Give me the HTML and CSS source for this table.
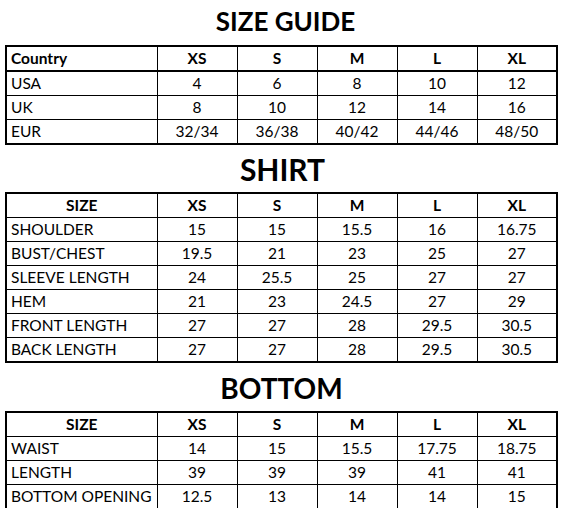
FILE: index.html
```html
<!DOCTYPE html>
<html>
<head>
<meta charset="utf-8">
<link rel="stylesheet" href="styles.css">
</head>
<body>
<div class="page">
  <h1 class="title title-guide">SIZE GUIDE</h1>
  <table class="chart chart-country">
    <colgroup><col class="c-label"><col class="c-size"><col class="c-size"><col class="c-size"><col class="c-size"><col class="c-size"></colgroup>
    <tr class="head"><th class="label">Country</th><th>XS</th><th>S</th><th>M</th><th>L</th><th>XL</th></tr>
    <tr><td class="label">USA</td><td>4</td><td>6</td><td>8</td><td>10</td><td>12</td></tr>
    <tr><td class="label">UK</td><td>8</td><td>10</td><td>12</td><td>14</td><td>16</td></tr>
    <tr><td class="label">EUR</td><td>32/34</td><td>36/38</td><td>40/42</td><td>44/46</td><td>48/50</td></tr>
  </table>

  <h2 class="title title-shirt">SHIRT</h2>
  <table class="chart">
    <colgroup><col class="c-label"><col class="c-size"><col class="c-size"><col class="c-size"><col class="c-size"><col class="c-size"></colgroup>
    <tr class="head"><th>SIZE</th><th>XS</th><th>S</th><th>M</th><th>L</th><th>XL</th></tr>
    <tr><td class="label">SHOULDER</td><td>15</td><td>15</td><td>15.5</td><td>16</td><td>16.75</td></tr>
    <tr><td class="label">BUST/CHEST</td><td>19.5</td><td>21</td><td>23</td><td>25</td><td>27</td></tr>
    <tr><td class="label">SLEEVE LENGTH</td><td>24</td><td>25.5</td><td>25</td><td>27</td><td>27</td></tr>
    <tr><td class="label">HEM</td><td>21</td><td>23</td><td>24.5</td><td>27</td><td>29</td></tr>
    <tr><td class="label">FRONT LENGTH</td><td>27</td><td>27</td><td>28</td><td>29.5</td><td>30.5</td></tr>
    <tr><td class="label">BACK LENGTH</td><td>27</td><td>27</td><td>28</td><td>29.5</td><td>30.5</td></tr>
  </table>

  <h2 class="title title-bottom">BOTTOM</h2>
  <table class="chart">
    <colgroup><col class="c-label"><col class="c-size"><col class="c-size"><col class="c-size"><col class="c-size"><col class="c-size"></colgroup>
    <tr class="head"><th>SIZE</th><th>XS</th><th>S</th><th>M</th><th>L</th><th>XL</th></tr>
    <tr><td class="label">WAIST</td><td>14</td><td>15</td><td>15.5</td><td>17.75</td><td>18.75</td></tr>
    <tr><td class="label">LENGTH</td><td>39</td><td>39</td><td>39</td><td>41</td><td>41</td></tr>
    <tr><td class="label">BOTTOM OPENING</td><td>12.5</td><td>13</td><td>14</td><td>14</td><td>15</td></tr>
  </table>
</div>
</body>
</html>
```

FILE: styles.css
```css
html, body {
  margin: 0;
  padding: 0;
  background: #fff;
}

body {
  font-family: Lato, "Open Sans", sans-serif;
  color: #000;
}

.page {
  width: 552px;
  padding-left: 5px;
}

.title {
  margin: 0;
  font-weight: 700;
  line-height: 1;
  text-align: center;
  box-sizing: border-box;
}

.title-guide {
  font-size: 26px;
  height: 45px;
  padding-top: 7.5px;
  padding-left: 9px;
}

.title-shirt {
  font-size: 30px;
  height: 47px;
  padding-top: 9px;
  padding-left: 3px;
}

.title-bottom {
  font-size: 28px;
  height: 48px;
  padding-top: 10.5px;
  padding-left: 1px;
}

.chart {
  width: 552px;
  border-collapse: collapse;
  table-layout: fixed;
  border: 2px solid #000;
  font-size: 15.5px;
}

.c-label {
  width: 151px;
}

.c-size {
  width: 80px;
}

.chart th,
.chart td {
  border: 1px solid #000;
  padding: 0;
  height: 23px;
  text-align: center;
  line-height: 1;
  white-space: nowrap;
}

.chart th {
  font-weight: 700;
}

.chart .label {
  text-align: left;
  padding-left: 4px;
}

.chart-country .head th {
  border-bottom-width: 2px;
}
```
